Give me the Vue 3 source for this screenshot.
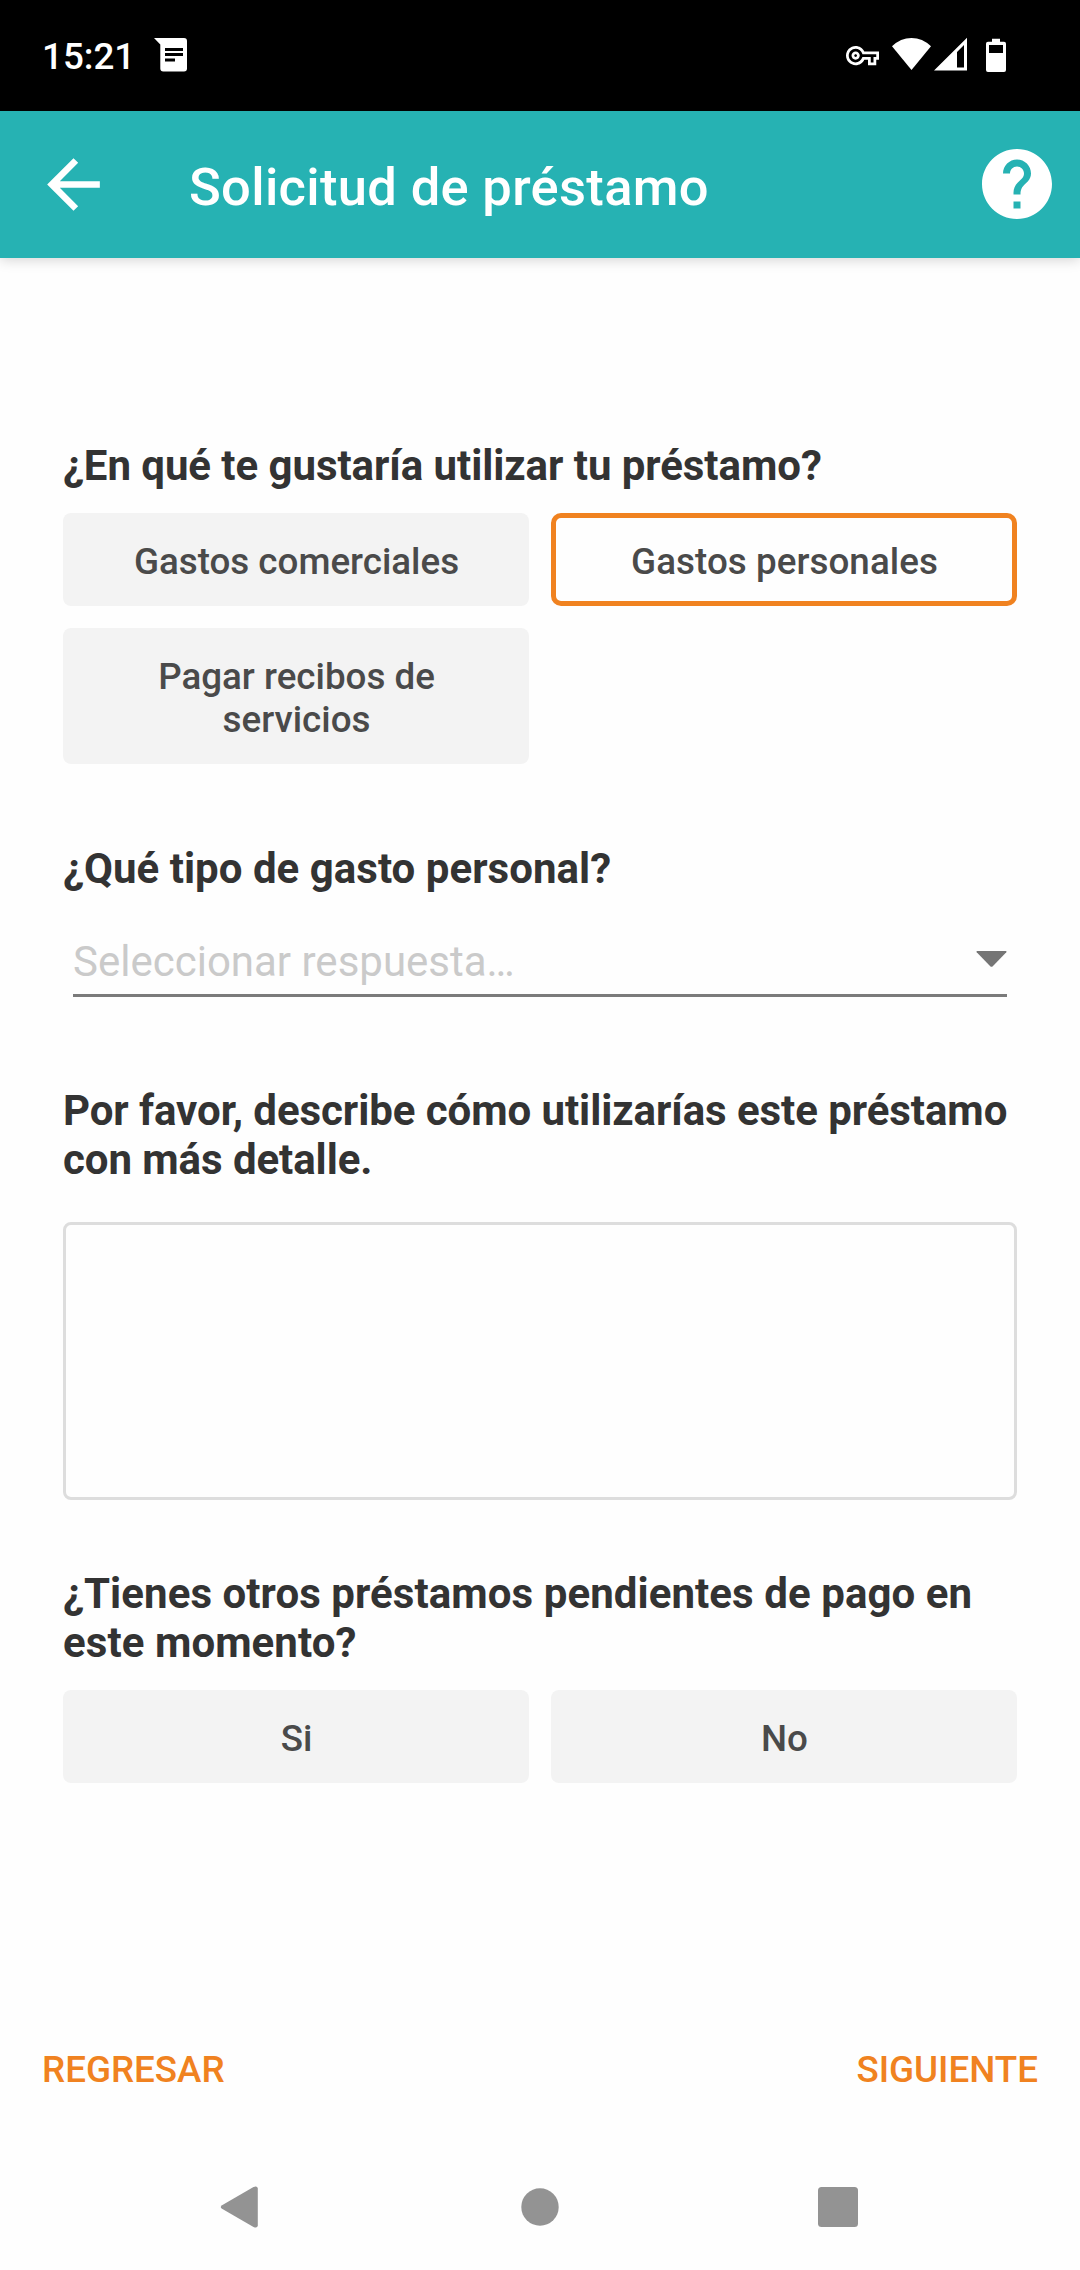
<script setup>
import { ref } from 'vue'

const purposes = ['Gastos comerciales', 'Gastos personales', 'Pagar recibos de servicios']
const purpose = ref('Gastos personales')
const answers = ['Si', 'No']
const pending = ref(null)
const detail = ref('')
</script>

<template>
  <div class="screen">
    <div class="status">
      <span class="clock">15:21</span>
      <svg class="message" width="35" height="35" viewBox="0 0 35 35">
        <path fill="#fff" d="M0 1H30a3 3 0 0 1 3 3v27.500a3 3 0 0 1-3 3H9.300a3 3 0 0 1-3-3V7.500z" />
        <path fill="#000" d="M11 11h18v3H11zM11 16h18v3H11zM11 21.500h10v3H11z" />
      </svg>
      <svg class="key" width="33" height="33" viewBox="0 0 24 24" fill="#fff">
        <path d="M22,19h-6v-4h-2.680c-1.140,2.420-3.600,4-6.320,4c-3.860,0-7-3.140-7-7s3.140-7,7-7c2.720,0,5.170,1.580,6.320,4H24v6h-2V19z M18,17h2v-4h2v-2H11.940l-0.230-0.670C11.010,8.340,9.110,7,7,7c-2.760,0-5,2.240-5,5s2.240,5,5,5c2.110,0,4.010-1.340,4.710-3.330L11.940,13H18V17z M7,15c-1.650,0-3-1.350-3-3s1.350-3,3-3s3,1.350,3,3S8.650,15,7,15z M7,11c-0.550,0-1,0.450-1,1s0.450,1,1,1s1-0.450,1-1S7.550,11,7,11z" />
      </svg>
      <svg class="wifi" width="39" height="34" viewBox="0 0 39 34" fill="#fff">
        <path d="M0 9.300Q8.500 1 19.500 1T39 9.300L19.500 33z" />
      </svg>
      <svg class="signal" width="33" height="34" viewBox="0 0 33 34">
        <path fill="#fff" fill-rule="evenodd" d="M0 33.500L33 .7v32.800zM23 15v15.500h7V8z" />
      </svg>
      <svg class="battery" width="20" height="35" viewBox="0 0 20 35">
        <path fill="#fff" fill-rule="evenodd" d="M6 .7h8v3h4a2 2 0 0 1 2 2V32a2 2 0 0 1-2 2H2a2 2 0 0 1-2-2V5.700a2 2 0 0 1 2-2h4zM3 7v8h14V7z" />
      </svg>
    </div>

    <header class="appbar">
      <svg class="back" width="79" height="79" viewBox="0 0 24 24" fill="#fff">
        <path d="M20 11H7.830l5.590-5.590L12 4l-8 8 8 8 1.410-1.410L7.830 13H20v-2z" />
      </svg>
      <h1>Solicitud de préstamo</h1>
      <svg class="help" width="84" height="84" viewBox="0 0 24 24" fill="#fff">
        <path d="M12 2C6.480 2 2 6.480 2 12s4.480 10 10 10 10-4.480 10-10S17.520 2 12 2zm1 17h-2v-2h2v2zm2.070-7.750l-.9.920C13.450 12.900 13 13.500 13 15h-2v-.5c0-1.100.450-2.100 1.170-2.830l1.240-1.260c.370-.360.590-.860.590-1.410 0-1.100-.9-2-2-2s-2 .9-2 2H8c0-2.210 1.790-4 4-4s4 1.790 4 4c0 .880-.360 1.680-.930 2.250z" />
      </svg>
    </header>

    <main class="form">
      <h2 class="q-purpose">¿En qué te gustaría utilizar tu préstamo?</h2>
      <div class="options">
        <button
          v-for="p in purposes"
          :key="p"
          class="option"
          :class="{ selected: p === purpose }"
          @click="purpose = p"
        >{{ p }}</button>
      </div>

      <h2 class="q-type">¿Qué tipo de gasto personal?</h2>
      <div class="select">
        <span>Seleccionar respuesta…</span>
        <svg width="31" height="17" viewBox="0 0 31 17" fill="#757575">
          <path d="M1 0h29q1 .4.3 1.300L16.500 15.400q-1 .9-2 0L.7 1.300Q0 .4 1 0z" />
        </svg>
      </div>

      <h2 class="q-detail">Por favor, describe cómo utilizarías este préstamo con más detalle.</h2>
      <textarea v-model="detail" class="detail"></textarea>

      <h2 class="q-pending">¿Tienes otros préstamos pendientes de pago en este momento?</h2>
      <div class="options">
        <button
          v-for="a in answers"
          :key="a"
          class="option"
          :class="{ selected: a === pending }"
          @click="pending = a"
        >{{ a }}</button>
      </div>
    </main>

    <footer class="actions">
      <button>REGRESAR</button>
      <button>SIGUIENTE</button>
    </footer>

    <nav class="system">
      <svg width="38" height="44" viewBox="0 0 38 44">
        <path d="M33.500 2L2 20.200q-2.500 1.800 0 3.600L33.500 42q4 1.500 4.300-1.500V3.500Q37.500.5 33.500 2z" />
      </svg>
      <svg class="home" width="38" height="38" viewBox="0 0 38 38"><circle cx="19" cy="19" r="18.700" /></svg>
      <svg width="40" height="40" viewBox="0 0 40 40"><rect width="40" height="40" rx="3.500" /></svg>
    </nav>
  </div>
</template>

<style>
body {
  margin: 0;
  background: #fefefe;
}
</style>

<style scoped>
.screen {
  display: flex;
  flex-direction: column;
  box-sizing: border-box;
  width: 1080px;
  height: 2270px;
  overflow: hidden;
  background: #fefefe;
  font-family: Roboto, "Liberation Sans", sans-serif;
}
svg {
  display: block;
  flex: none;
}
button {
  margin: 0;
  border: 0;
  background: none;
  font-family: inherit;
}
.status {
  display: flex;
  align-items: flex-start;
  box-sizing: border-box;
  height: 111px;
  padding: 0 74px 0 42px;
  background: #000;
  color: #fff;
}
.clock {
  width: 112px;
  margin-top: 35px;
  font-size: 36.750px;
  font-weight: 500;
  line-height: 43px;
}
.message { margin-top: 37px; }
.key { margin: 39px 13px 0 auto; }
.wifi { margin-top: 37px; }
.signal { margin: 37px 19px 0 3px; }
.battery { margin-top: 38px; }
.appbar {
  display: flex;
  align-items: center;
  box-sizing: border-box;
  height: 147px;
  padding: 0 21px 0 34px;
  background: #26b2b3;
  box-shadow: 0 2px 12px rgba(0, 0, 0, 0.17);
}
.help { margin-bottom: 2px; }
h1 {
  flex: 1;
  margin: 5px 0 0 76px;
  color: #fff;
  font-size: 52.500px;
  font-weight: 500;
  letter-spacing: 0.320px;
  line-height: 62px;
}
.form {
  display: flex;
  flex-direction: column;
  padding: 183px 63px 0;
}
h2 {
  margin: 0;
  color: #333;
  font-size: 42px;
  font-weight: 700;
  line-height: 49px;
}
.options {
  display: grid;
  grid-template-columns: 466px 466px;
  gap: 22px;
  margin-top: 23px;
}
.option {
  box-sizing: border-box;
  padding: 27px 59px 23px 60px;
  border-radius: 8px;
  background: #f3f3f3;
  color: #4a4a4a;
  font-size: 36.750px;
  font-weight: 500;
  line-height: 43px;
}
.option.selected {
  padding: 22px 54px 18px 55px;
  border: 5px solid #f08220;
  border-radius: 10px;
  background: #fefefe;
  letter-spacing: 0.060px;
}
.q-purpose { letter-spacing: -0.060px; }
.q-type {
  margin-top: 80px;
  letter-spacing: 0.030px;
}
.select {
  display: flex;
  justify-content: space-between;
  align-items: flex-start;
  box-sizing: border-box;
  height: 59.600px;
  margin: 44px 10px 0;
  border-bottom: 3px solid #7b7b7b;
  color: #cacaca;
  font-size: 42px;
  line-height: 49px;
}
.select svg { margin-top: 14px; }
.q-detail {
  margin-top: 89.400px;
  letter-spacing: -0.070px;
}
.detail {
  box-sizing: border-box;
  height: 278px;
  margin: 38px 0 0;
  padding: 20px;
  border: 3px solid #ddd;
  border-radius: 8px;
  background: transparent;
  font: inherit;
  font-size: 42px;
  resize: none;
  outline: none;
}
.q-pending {
  margin-top: 69px;
  letter-spacing: 0.070px;
}
.actions {
  display: flex;
  justify-content: space-between;
  margin-top: 265px;
  padding: 0 42px;
}
.actions button {
  padding: 0;
  color: #f08220;
  font-size: 36.750px;
  font-weight: 500;
  line-height: 43px;
}
.system {
  display: flex;
  justify-content: space-between;
  align-items: center;
  height: 44px;
  margin-top: 94px;
  padding: 0 222px 0 219.500px;
  fill: #939393;
}
.home { margin-left: 4px; }
</style>
